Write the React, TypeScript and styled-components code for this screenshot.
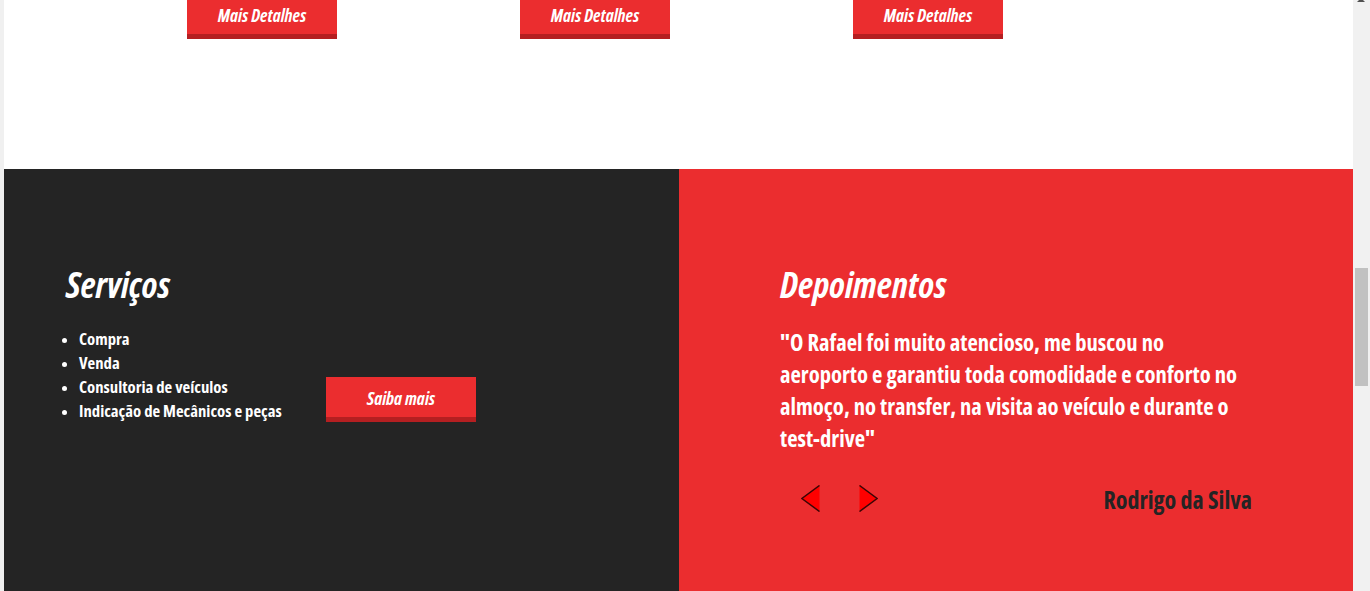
import React from "react";
import styled, { createGlobalStyle } from "styled-components";

const Global = createGlobalStyle`
  html, body { margin: 0; padding: 0; overflow: hidden; background: #f0f0f0; }
  body {
    font-family: "Open Sans", "Liberation Sans", Arial, sans-serif;
    font-stretch: 75%;
  }
  * { box-sizing: border-box; }
`;

const RED = "#eb2d2f";
const DARK = "#242424";
const FONT = `"Open Sans", "Liberation Sans", Arial, sans-serif`;

const Page = styled.div`
  display: flex;
  width: 1370px;
  height: 591px;
  overflow: hidden;
`;

const Gutter = styled.div`
  width: 4px;
  flex: none;
  background: #f0f0f0;
`;

const Main = styled.main`
  flex: 1;
  display: flex;
  flex-direction: column;
  min-width: 0;
`;

const Scrollbar = styled.div`
  position: relative;
  width: 17px;
  flex: none;
  background: #f1f1f1;
`;

const ScrollArrow = styled.div`
  position: absolute;
  top: -2px;
  left: 4px;
  width: 0;
  height: 0;
  border-left: 4px solid transparent;
  border-right: 4px solid transparent;
  border-bottom: 4px solid #505050;
`;

const Thumb = styled.div`
  position: absolute;
  top: 268px;
  left: 2px;
  width: 13px;
  height: 118px;
  background: #c1c1c1;
`;

const TopSection = styled.section`
  height: 169px;
  background: #fff;
  flex: none;
`;

const ButtonRow = styled.div`
  display: flex;
  gap: 183px;
  padding-left: 183px;
  margin-top: -6px;
`;

const RedButton = styled.a`
  display: flex;
  align-items: center;
  justify-content: center;
  width: 150px;
  height: 45px;
  background: ${RED};
  border-bottom: 5px solid #b51f21;
  color: #fff;
  font-family: ${FONT};
  font-stretch: 75%;
  font-style: italic;
  font-weight: 700;
  font-size: 17.6px;
  text-decoration: none;
  padding-top: 1px;
`;

const Bottom = styled.section`
  display: grid;
  grid-template-columns: 675px 674px;
  height: 460px;
  flex: none;
`;

const DarkPanel = styled.div`
  background: ${DARK};
  padding: 91px 0 0 62px;
  color: #fff;
`;

const RedPanel = styled.div`
  background: ${RED};
  padding: 91px 101px 0 101px;
  color: #fff;
`;

const Heading = styled.h2`
  margin: 0;
  font-family: ${FONT};
  font-stretch: 75%;
  font-style: italic;
  font-weight: 700;
  font-size: 35.6px;
  line-height: 48px;
  color: #fff;
`;

const ServicesRow = styled.div`
  display: flex;
  align-items: flex-end;
  margin-top: 19px;
`;

const List = styled.ul`
  margin: 0;
  padding: 0 0 0 13px;
  width: 260px;
  flex: none;
  font-weight: 700;
  font-size: 16.7px;
  line-height: 24px;
  color: #fff;
  white-space: nowrap;
  li::marker { font-size: 15px; }
`;

const SaibaButton = styled(RedButton)`
  margin-bottom: 1px;
`;

const Quote = styled.p`
  margin: 19px 0 0;
  font-weight: 700;
  font-size: 22.6px;
  line-height: 32px;
  color: #fff;
  white-space: nowrap;
`;

const Footer = styled.div`
  display: flex;
  align-items: flex-start;
  justify-content: space-between;
  margin-top: 30px;
  padding-left: 21px;
`;

const Arrows = styled.div`
  display: flex;
  gap: 39px;
`;

const ArrowBtn = styled.button`
  display: block;
  padding: 0;
  border: 0;
  background: none;
  width: 19px;
  height: 27px;
  cursor: pointer;
`;

const Author = styled.div`
  font-weight: 700;
  font-size: 24px;
  line-height: 28px;
  color: ${DARK};
  margin-top: 1px;
`;

const Arrow = ({ dir }: { dir: "left" | "right" }) => (
  <ArrowBtn aria-label={dir === "left" ? "Anterior" : "Próximo"}>
    <svg width="19" height="27" viewBox="0 0 19 27">
      <g transform={dir === "right" ? "translate(19,0) scale(-1,1)" : undefined}>
        <polygon points="18.5,0.5 0.9,13.5 18.5,26.5" fill="#ff0000" />
        <polyline
          points="18.5,0.5 0.9,13.5 18.5,26.5"
          fill="none"
          stroke="#3a0606"
          strokeWidth="1.5"
          strokeLinejoin="miter"
        />
      </g>
    </svg>
  </ArrowBtn>
);

export default function App() {
  return (
    <>
      <Global />
      <Page>
        <Gutter />
        <Main>
          <TopSection>
            <ButtonRow>
              <RedButton href="#">Mais Detalhes</RedButton>
              <RedButton href="#">Mais Detalhes</RedButton>
              <RedButton href="#">Mais Detalhes</RedButton>
            </ButtonRow>
          </TopSection>
          <Bottom>
            <DarkPanel>
              <Heading>Serviços</Heading>
              <ServicesRow>
                <List>
                  <li>Compra</li>
                  <li>Venda</li>
                  <li>Consultoria de veículos</li>
                  <li>Indicação de Mecânicos e peças</li>
                </List>
                <SaibaButton href="#">Saiba mais</SaibaButton>
              </ServicesRow>
            </DarkPanel>
            <RedPanel>
              <Heading>Depoimentos</Heading>
              <Quote>
                "O Rafael foi muito atencioso, me buscou no
                <br />
                aeroporto e garantiu toda comodidade e conforto no
                <br />
                almoço, no transfer, na visita ao veículo e durante o
                <br />
                test-drive"
              </Quote>
              <Footer>
                <Arrows>
                  <Arrow dir="left" />
                  <Arrow dir="right" />
                </Arrows>
                <Author>Rodrigo da Silva</Author>
              </Footer>
            </RedPanel>
          </Bottom>
        </Main>
        <Scrollbar>
          <ScrollArrow />
          <Thumb />
        </Scrollbar>
      </Page>
    </>
  );
}
